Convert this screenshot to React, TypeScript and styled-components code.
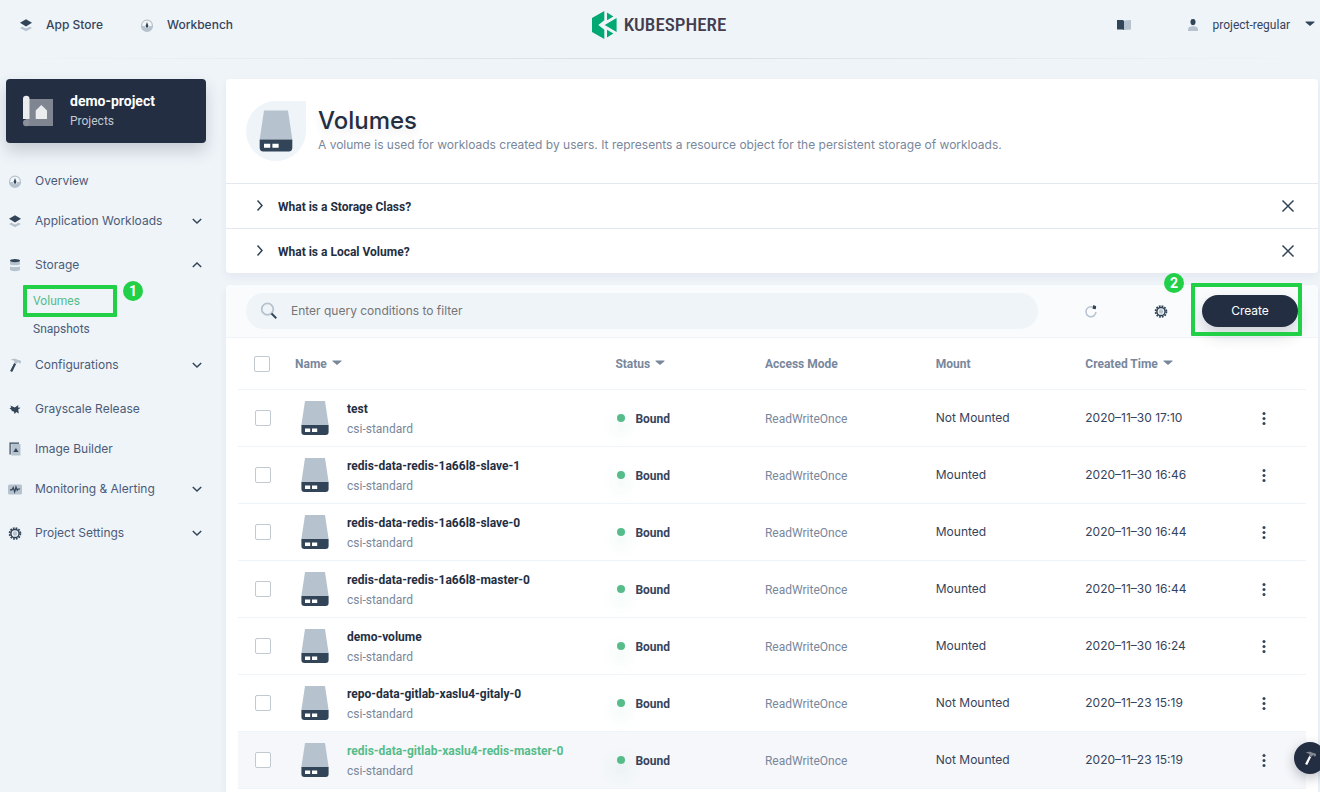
import React from "react";
import styled, { createGlobalStyle } from "styled-components";

const c = {
  bg: "#eff4f9",
  dark: "#242e42",
  text: "#36435c",
  nav: "#4a5b78",
  muted: "#79879c",
  green: "#55bc8a",
  mark: "#22d048",
  iconDark: "#324558",
  iconLight: "#b6c2cd",
  line: "#e3e9ef",
};

const roboto = `Roboto, "Liberation Sans", sans-serif`;

const Global = createGlobalStyle`
  *, *::before, *::after { box-sizing: border-box; }
  body {
    margin: 0;
    background: ${c.bg};
    color: ${c.text};
    font: 400 12px/20px Inter, "Liberation Sans", sans-serif;
  }
  h1, p, ul { margin: 0; padding: 0; }
  ul { list-style: none; }
  a { color: inherit; text-decoration: none; }
  button { font: inherit; color: inherit; background: none; border: 0; padding: 0; cursor: pointer; }
  svg { display: block; flex: none; }
`;

/* ---------- icons ---------- */

type IconProps = { size?: number; light?: string; dark?: string };
type IconType = (p: IconProps) => React.ReactElement;

const Svg = ({ size = 16, children }: { size?: number; children: React.ReactNode }) => (
  <svg width={size} height={size} viewBox="0 0 16 16" fill="none" aria-hidden="true">
    {children}
  </svg>
);

const LayersIcon: IconType = ({ size }) => (
  <Svg size={size}>
    <path d="M2 11l2.4-1.3L8 11.6l3.6-1.9L14 11l-6 3.2z" fill={c.iconLight} />
    <path d="M8 2.2l6 3.6-6 3.6-6-3.6z" fill={c.iconDark} />
  </Svg>
);

const DashIcon: IconType = ({ size }) => (
  <Svg size={size}>
    <circle cx="8" cy="8.500" r="5.400" fill="#f4f7fa" stroke={c.iconLight} strokeWidth="1.200" />
    <path d="M2 9h3.800a2.200 2.200 0 0 0 4.400 0H14a6 6 0 0 1-12 0z" fill={c.iconLight} />
    <path d="M8 5l1.200 3.200v1.400a1.200 1.200 0 0 1-2.400 0V8.200z" fill={c.iconDark} />
  </Svg>
);

const StorageIcon: IconType = ({ size }) => (
  <Svg size={size}>
    <path d="M3 4c0 1.400 10 1.400 10 0v3.200c0 1.500-10 1.500-10 0z" fill={c.iconLight} />
    <path d="M3 9.200c1.500 1.200 8.500 1.200 10 0v3.600c0 1.800-10 1.800-10 0z" fill={c.iconLight} />
    <ellipse cx="8" cy="3.600" rx="5" ry="1.600" fill={c.iconDark} />
  </Svg>
);

const HammerIcon: IconType = ({ size, light = c.iconLight, dark = c.iconDark }) => (
  <Svg size={size}>
    <path d="M7.200 6l1.900.9-3.900 8-2.100-1z" fill={dark} />
    <path d="M3.200 3.200C5.400 1.700 7.500 1.500 9.600 2.300l1.500.8 1-.2 2 1.200-.4 2.100-1.400.2-.8-1.100-.9.1-.9 1.400L7.100 5.500l.4-1.300C6.300 3.200 4.900 2.900 3.200 3.200z" fill={light} />
  </Svg>
);

const BirdIcon: IconType = ({ size }) => (
  <Svg size={size}>
    <path d="M3.400 4.500l4.400 2L11.300 4l-.3 2.600 2.600.1-2.400 1.700.6 4.200-2.500-1.700-1.600 2-.9-2.500c-1.600-.1-2.400-.8-2.600-2L2.400 7.300l1.900-.7z" fill={c.iconDark} />
  </Svg>
);

const ImageIcon: IconType = ({ size }) => (
  <Svg size={size}>
    <path d="M4.300 3H13.500V14.500H4.300z" fill={c.iconLight} />
    <path d="M2.500 1.500H12v1.200H3.700V13.500H2.500z" fill={c.iconDark} />
    <path d="M8.900 7l2.600 4H6.300z" fill={c.iconDark} />
  </Svg>
);

const MonitorIcon: IconType = ({ size }) => (
  <Svg size={size}>
    <rect x="1" y="3.500" width="14" height="10" rx="1.500" fill={c.iconLight} />
    <path d="M3 8.900h2l1.200-2.400 1.500 4.500L9 6l1.200 3.300 1-1.300H13" stroke={c.iconDark} strokeWidth="1.200" />
  </Svg>
);

const GearIcon: IconType = ({ size }) => (
  <Svg size={size}>
    <circle cx="8" cy="8.500" r="5.400" stroke={c.iconDark} strokeWidth="1.800" strokeDasharray="1.700 1.127" />
    <circle cx="8" cy="8.500" r="4.100" fill="#f4f7fa" stroke={c.iconDark} strokeWidth="1.500" />
    <circle cx="8" cy="8.500" r="2.200" fill={c.iconLight} />
  </Svg>
);

const BookIcon = () => (
  <Svg>
    <path d="M8 3.600L15 3v9.600L8 13z" fill={c.iconLight} />
    <path d="M1 3h5.500L8 3.800V13l-1.500-.4H1z" fill={c.iconDark} />
  </Svg>
);

const UserIcon = () => (
  <Svg>
    <path d="M3 14v-1.500C3 10.300 4.500 9.300 8 9.300s5 1 5 3.200V14z" fill={c.iconLight} />
    <rect x="5.500" y="2" width="5" height="6.200" rx="2.400" fill={c.iconDark} />
  </Svg>
);

const CaretIcon = ({ color = c.iconDark }: { color?: string }) => (
  <Svg>
    <path d="M3.500 4.500h9v.8L8 9.100 3.500 5.300z" fill={color} />
  </Svg>
);

const Chevron = ({ d = "M3.800 6l4.200 4 4.200-4" }: { d?: string }) => (
  <Svg>
    <path d={d} stroke={c.iconDark} strokeWidth="1.500" />
  </Svg>
);

const SearchIcon = () => (
  <Svg size={20}>
    <circle cx="6.800" cy="6.500" r="4.600" stroke={c.iconLight} strokeWidth="1.400" />
    <path d="M10 10l3.800 3.800" stroke={c.iconDark} strokeWidth="1.600" />
  </Svg>
);

const RefreshIcon = () => (
  <Svg>
    <path d="M10 4.200A5 5 0 1 0 12.900 9" stroke={c.iconLight} strokeWidth="1.500" />
    <path d="M10.300 2l2.900 1.200-.5 3-3.200-.4z" fill={c.iconDark} />
  </Svg>
);

const MoreIcon = () => (
  <Svg>
    <circle cx="8" cy="3.500" r="1.500" fill={c.iconDark} />
    <circle cx="8" cy="8.500" r="1.500" fill={c.iconDark} />
    <circle cx="8" cy="13.500" r="1.500" fill={c.iconDark} />
  </Svg>
);

const DiskIcon = ({ size = 40 }: { size?: number }) => (
  <svg width={size} height={size} viewBox="0 0 40 40" aria-hidden="true">
    <path d="M10 3h20l3.600 24H6.400z" fill={c.iconLight} />
    <path d="M6.400 27h27.200v7a3 3 0 0 1-3 3H9.400a3 3 0 0 1-3-3z" fill={c.iconDark} />
    <path d="M10 30.600h5.200v3.400h-5.200zM17 30.600h5.200v3.400h-5.200z" fill="#fff" />
  </svg>
);

const ProjectIcon = () => (
  <svg width="40" height="40" viewBox="0 0 40 40" aria-hidden="true">
    <path d="M8 8h27v27H8z" fill="#7f8591" />
    <path d="M5 8a3 3 0 0 1 6.500 0v20H5z" fill="#eaecee" />
    <path d="M11.500 28v4a3.200 3.200 0 0 1-6.500 0 3.300 3.300 0 0 1 6.500-1z" fill="#8b909b" />
    <path d="M23.300 14l5.700 5.400V28H17.700v-8.600z" fill="#eaecee" />
  </svg>
);

const LogoMark = () => (
  <svg width="25" height="28" viewBox="0 0 25 28" aria-hidden="true">
    <path d="M12.300 0v9.300L6.300 14l6 4.700V28L0 21V7zM15 1.600l6.400 3.800L15 9.200zM24.600 7v14L12.700 14zM15 18.800l6.400 3.800-6.400 3.800z" fill="#00a971" />
  </svg>
);

/* ---------- shell ---------- */

const Page = styled.div`
  display: flex;
  flex-direction: column;
  min-height: 100vh;
`;

const Header = styled.header`
  display: grid;
  grid-template-columns: 1fr auto 1fr;
  align-items: center;
  height: 59px;
  padding: 0 2px 9px 0;
  background: linear-gradient(90deg, ${c.bg}, #d8dee5 50%, ${c.bg}) left bottom / 100% 1px no-repeat;
`;

const TopNav = styled.nav`
  display: flex;
  gap: 36px;
  padding-left: 18px;
`;

const TopLink = styled.a`
  display: flex;
  align-items: center;
  gap: 12px;
  font-weight: 500;
`;

const Logo = styled.a`
  display: flex;
  align-items: center;
  gap: 7px;
  color: #443d4e;
  font: 500 19px/28px "Roboto Condensed", Roboto, sans-serif;
`;

const Account = styled.div`
  display: flex;
  justify-content: flex-end;
  align-items: center;
  gap: 53px;
`;

const UserButton = styled.button`
  display: flex;
  align-items: center;
  gap: 12px;
  font-family: ${roboto};
`;

const Columns = styled.div`
  flex: 1;
  display: flex;
  gap: 20px;
  padding: 20px 2px 0 6px;
`;

const Sidebar = styled.aside`
  flex: none;
  width: 200px;
`;

const ProjectCard = styled.button`
  display: flex;
  align-items: center;
  gap: 12px;
  width: 100%;
  height: 64px;
  margin-bottom: 20px;
  padding: 0 12px;
  border-radius: 4px;
  background: ${c.dark};
  box-shadow: 0 8px 16px rgba(36, 46, 66, 0.2);
  font-family: ${roboto};
  text-align: left;
`;

const ProjectName = styled.strong`
  display: block;
  color: #fff;
  font-size: 14px;
  font-weight: 700;
`;

const ProjectKind = styled.span`
  display: block;
  color: #c3c9d3;
`;

const NavItem = styled.li<{ $group?: boolean }>`
  margin-bottom: ${(p) => (p.$group ? 8 : 4)}px;
`;

const NavLink = styled.a`
  display: flex;
  align-items: center;
  gap: 12px;
  height: 36px;
  padding: 0 1px;
  color: ${c.nav};
`;

const NavLabel = styled.span`
  flex: 1;
`;

const SubList = styled.ul`
  margin: 4px 0 -4px;
  padding-left: 27px;
`;

const SubItem = styled.li`
  position: relative;
  color: ${c.nav};
  font-family: ${roboto};
  line-height: 28px;

  a[aria-current] { color: ${c.green}; }
`;

const Highlight = styled.span<{ $inset: string }>`
  position: absolute;
  inset: ${(p) => p.$inset};
  border: 4px solid ${c.mark};
  border-radius: 1px;
  pointer-events: none;
`;

const StepBadge = styled.span<{ $left: number; $top: number }>`
  position: absolute;
  left: ${(p) => p.$left}px;
  top: ${(p) => p.$top}px;
  width: 20px;
  height: 20px;
  border-radius: 50%;
  background: ${c.mark};
  color: #fff;
  font: 700 14px/20px ${roboto};
  text-align: center;
`;

/* ---------- content ---------- */

const Main = styled.main`
  flex: 1;
  min-width: 0;
  display: flex;
  flex-direction: column;
  gap: 12px;
`;

const Card = styled.section<{ $fill?: boolean }>`
  flex: ${(p) => (p.$fill ? 1 : "none")};
  border-radius: ${(p) => (p.$fill ? "4px 4px 0 0" : "4px")};
  background: #fff;
  box-shadow: 0 4px 8px rgba(36, 46, 66, 0.06);
`;

const Banner = styled.div`
  display: flex;
  align-items: center;
  gap: 12px;
  height: 104px;
  padding: 0 20px;
`;

const BannerIcon = styled.div`
  display: grid;
  place-items: center;
  width: 60px;
  height: 60px;
  border-radius: 50% 0 50% 50%;
  background: ${c.bg};
`;

const Title = styled.h1`
  color: ${c.dark};
  font-size: 24px;
  font-weight: 500;
  line-height: 28px;
  text-shadow: 0 4px 8px rgba(36, 46, 66, 0.1);
`;

const Description = styled.p`
  color: ${c.muted};
`;

const Tip = styled.div`
  display: flex;
  align-items: center;
  height: 45px;
  padding: 0 22px 0 26px;
  border-top: 1px solid ${c.line};
`;

const TipToggle = styled.button`
  flex: 1;
  display: flex;
  align-items: center;
  gap: 10px;
  padding-top: 2px;
  color: ${c.dark};
  font-family: ${roboto};
  font-weight: 700;
  text-align: left;
`;

const Toolbar = styled.div`
  display: flex;
  align-items: center;
  padding: 8px 20px;
  border-bottom: 1px solid ${c.bg};
  border-radius: 4px 4px 0 0;
  background: #f9fbfd;
`;

const SearchBox = styled.label`
  flex: 1;
  display: flex;
  align-items: center;
  gap: 10px;
  height: 36px;
  margin-right: 18px;
  padding: 0 13px;
  border-radius: 18px;
  background: ${c.bg};
`;

const SearchInput = styled.input`
  flex: 1;
  border: 0;
  outline: 0;
  background: none;
  color: ${c.text};
  font: inherit;

  &::placeholder { color: #757575; opacity: 1; }
`;

const ToolButton = styled.button`
  display: grid;
  place-items: center;
  width: 70px;
  height: 32px;
`;

const CreateSlot = styled.div`
  position: relative;
  margin-left: 6px;
`;

const CreateButton = styled.button`
  width: 96px;
  height: 32px;
  border-radius: 16px;
  background: ${c.dark};
  box-shadow: 0 8px 16px rgba(36, 46, 66, 0.2);
  color: #fff;
`;

const TableWrap = styled.div`
  padding: 0 12px;
`;

const Table = styled.table`
  width: 100%;
  table-layout: fixed;
  border-collapse: separate;
  border-spacing: 0;
  text-align: left;
`;

const Th = styled.th<{ $w?: string }>`
  width: ${(p) => p.$w ?? "auto"};
  height: 52px;
  padding: 0;
  border-bottom: 1px solid ${c.bg};
  color: ${c.muted};
  font-family: ${roboto};
  font-weight: 700;

  &:first-child { padding-left: 16px; }
`;

const SortButton = styled.button`
  display: flex;
  align-items: center;
  gap: 2px;
`;

const Row = styled.tr<{ $active?: boolean }>`
  background: ${(p) => (p.$active ? "#f5f7fa" : "none")};
`;

const Td = styled.td<{ $muted?: boolean; $plain?: boolean }>`
  height: 57px;
  padding: ${(p) => (p.$muted ? "2px 0 0" : 0)};
  border-bottom: 1px solid ${c.bg};
  color: ${(p) => (p.$muted ? c.muted : c.text)};
  font-family: ${(p) => (p.$plain ? "inherit" : roboto)};

  &:first-child { padding-left: 17px; }
`;

const Check = styled.input`
  appearance: none;
  display: block;
  width: 16px;
  height: 16px;
  margin: 0;
  border: 1px solid #c1c9d1;
  border-radius: 2px;
  background: #fff;
`;

const Volume = styled.div`
  display: flex;
  align-items: center;
  gap: 12px;
`;

const VolumeText = styled.div`
  padding-top: 2px;
`;

const VolumeName = styled.a<{ $active?: boolean }>`
  display: block;
  color: ${(p) => (p.$active ? c.green : c.dark)};
  font-weight: 700;
`;

const VolumeClass = styled.span`
  display: block;
  color: ${c.muted};
`;

const Status = styled.span`
  display: flex;
  align-items: center;
  gap: 10px;
  padding: 2px 0 0 2px;
  font-weight: 700;

  &::before {
    content: "";
    width: 8px;
    height: 8px;
    margin-bottom: 3px;
    border-radius: 50%;
    background: ${c.green};
    box-shadow: 0 8px 16px rgba(85, 188, 138, 0.36);
  }
`;

const MoreButton = styled.button`
  display: block;
  margin-left: 11px;
`;

const ToolboxButton = styled.button`
  position: fixed;
  right: -6px;
  bottom: 18px;
  display: grid;
  place-items: center;
  width: 32px;
  height: 32px;
  border-radius: 50%;
  background: ${c.dark};
  box-shadow: 0 4px 12px rgba(36, 46, 66, 0.3);
`;

/* ---------- data ---------- */

type Item = { label: string; icon: IconType; group?: boolean; open?: boolean };

const nav: Item[] = [
  { label: "Overview", icon: DashIcon },
  { label: "Application Workloads", icon: LayersIcon, group: true },
  { label: "Storage", icon: StorageIcon, group: true, open: true },
  { label: "Configurations", icon: HammerIcon, group: true },
  { label: "Grayscale Release", icon: BirdIcon },
  { label: "Image Builder", icon: ImageIcon },
  { label: "Monitoring & Alerting", icon: MonitorIcon, group: true },
  { label: "Project Settings", icon: GearIcon, group: true },
];

const volumes = [
  ["test", "Not Mounted", "2020–11–30 17:10"],
  ["redis-data-redis-1a66l8-slave-1", "Mounted", "2020–11–30 16:46"],
  ["redis-data-redis-1a66l8-slave-0", "Mounted", "2020–11–30 16:44"],
  ["redis-data-redis-1a66l8-master-0", "Mounted", "2020–11–30 16:44"],
  ["demo-volume", "Mounted", "2020–11–30 16:24"],
  ["repo-data-gitlab-xaslu4-gitaly-0", "Not Mounted", "2020–11–23 15:19"],
  ["redis-data-gitlab-xaslu4-redis-master-0", "Not Mounted", "2020–11–23 15:19"],
];

const Sortable = ({ children }: { children: string }) => (
  <SortButton>
    {children}
    <CaretIcon color={c.muted} />
  </SortButton>
);

export default function App() {
  return (
    <Page>
      <Global />
      <Header>
        <TopNav>
          <TopLink href="#apps"><LayersIcon />App Store</TopLink>
          <TopLink href="#workbench"><DashIcon />Workbench</TopLink>
        </TopNav>
        <Logo href="#home"><LogoMark />KUBESPHERE</Logo>
        <Account>
          <button aria-label="Documentation"><BookIcon /></button>
          <UserButton><UserIcon />project-regular<CaretIcon /></UserButton>
        </Account>
      </Header>

      <Columns>
        <Sidebar>
          <ProjectCard>
            <ProjectIcon />
            <span>
              <ProjectName>demo-project</ProjectName>
              <ProjectKind>Projects</ProjectKind>
            </span>
          </ProjectCard>
          <nav>
            <ul>
              {nav.map(({ label, icon: Icon, group, open }) => (
                <NavItem key={label} $group={group}>
                  <NavLink href="#nav">
                    <Icon />
                    <NavLabel>{label}</NavLabel>
                    {group && <Chevron d={open ? "M3.800 10L8 6l4.200 4" : undefined} />}
                  </NavLink>
                  {open && (
                    <SubList>
                      <SubItem>
                        <a href="#volumes" aria-current="page">Volumes</a>
                        <Highlight $inset="-2px 89px -2px -10px" />
                        <StepBadge $left={90} $top={-6}>1</StepBadge>
                      </SubItem>
                      <SubItem><a href="#snapshots">Snapshots</a></SubItem>
                    </SubList>
                  )}
                </NavItem>
              ))}
            </ul>
          </nav>
        </Sidebar>

        <Main>
          <Card>
            <Banner>
              <BannerIcon><DiskIcon size={48} /></BannerIcon>
              <div>
                <Title>Volumes</Title>
                <Description>
                  A volume is used for workloads created by users. It represents a resource object for the persistent storage of workloads.
                </Description>
              </div>
            </Banner>
            {["What is a Storage Class?", "What is a Local Volume?"].map((q) => (
              <Tip key={q}>
                <TipToggle><Chevron d="M5.500 1.500l4.500 5-4.500 5" />{q}</TipToggle>
                <button aria-label="Dismiss"><Chevron d="M2.500 2.500l11 11M13.500 2.500l-11 11" /></button>
              </Tip>
            ))}
          </Card>

          <Card $fill>
            <Toolbar>
              <SearchBox>
                <SearchIcon />
                <SearchInput aria-label="Filter volumes" placeholder="Enter query conditions to filter" />
              </SearchBox>
              <ToolButton aria-label="Refresh"><RefreshIcon /></ToolButton>
              <ToolButton aria-label="Column settings"><GearIcon /></ToolButton>
              <CreateSlot>
                <CreateButton>Create</CreateButton>
                <Highlight $inset="-12px -4px -9px -11px" />
                <StepBadge $left={-38} $top={-22}>2</StepBadge>
              </CreateSlot>
            </Toolbar>
            <TableWrap>
              <Table>
                <thead>
                  <tr>
                    <Th $w="57px"><Check type="checkbox" aria-label="Select all" /></Th>
                    <Th $w="30%"><Sortable>Name</Sortable></Th>
                    <Th $w="14%"><Sortable>Status</Sortable></Th>
                    <Th $w="16%">Access Mode</Th>
                    <Th $w="14%">Mount</Th>
                    <Th $w="15%"><Sortable>Created Time</Sortable></Th>
                    <Th />
                  </tr>
                </thead>
                <tbody>
                  {volumes.map(([name, mount, time], i) => {
                    const active = i === volumes.length - 1;
                    return (
                      <Row key={name} $active={active}>
                        <Td><Check type="checkbox" aria-label={`Select ${name}`} /></Td>
                        <Td>
                          <Volume>
                            <DiskIcon />
                            <VolumeText>
                              <VolumeName href="#volume" $active={active}>{name}</VolumeName>
                              <VolumeClass>csi-standard</VolumeClass>
                            </VolumeText>
                          </Volume>
                        </Td>
                        <Td><Status>Bound</Status></Td>
                        <Td $muted>ReadWriteOnce</Td>
                        <Td $plain>{mount}</Td>
                        <Td $plain>{time}</Td>
                        <Td><MoreButton aria-label="More actions"><MoreIcon /></MoreButton></Td>
                      </Row>
                    );
                  })}
                </tbody>
              </Table>
            </TableWrap>
          </Card>
        </Main>
      </Columns>
      <ToolboxButton aria-label="Toolbox"><HammerIcon light="#7f8591" dark="#fff" /></ToolboxButton>
    </Page>
  );
}
